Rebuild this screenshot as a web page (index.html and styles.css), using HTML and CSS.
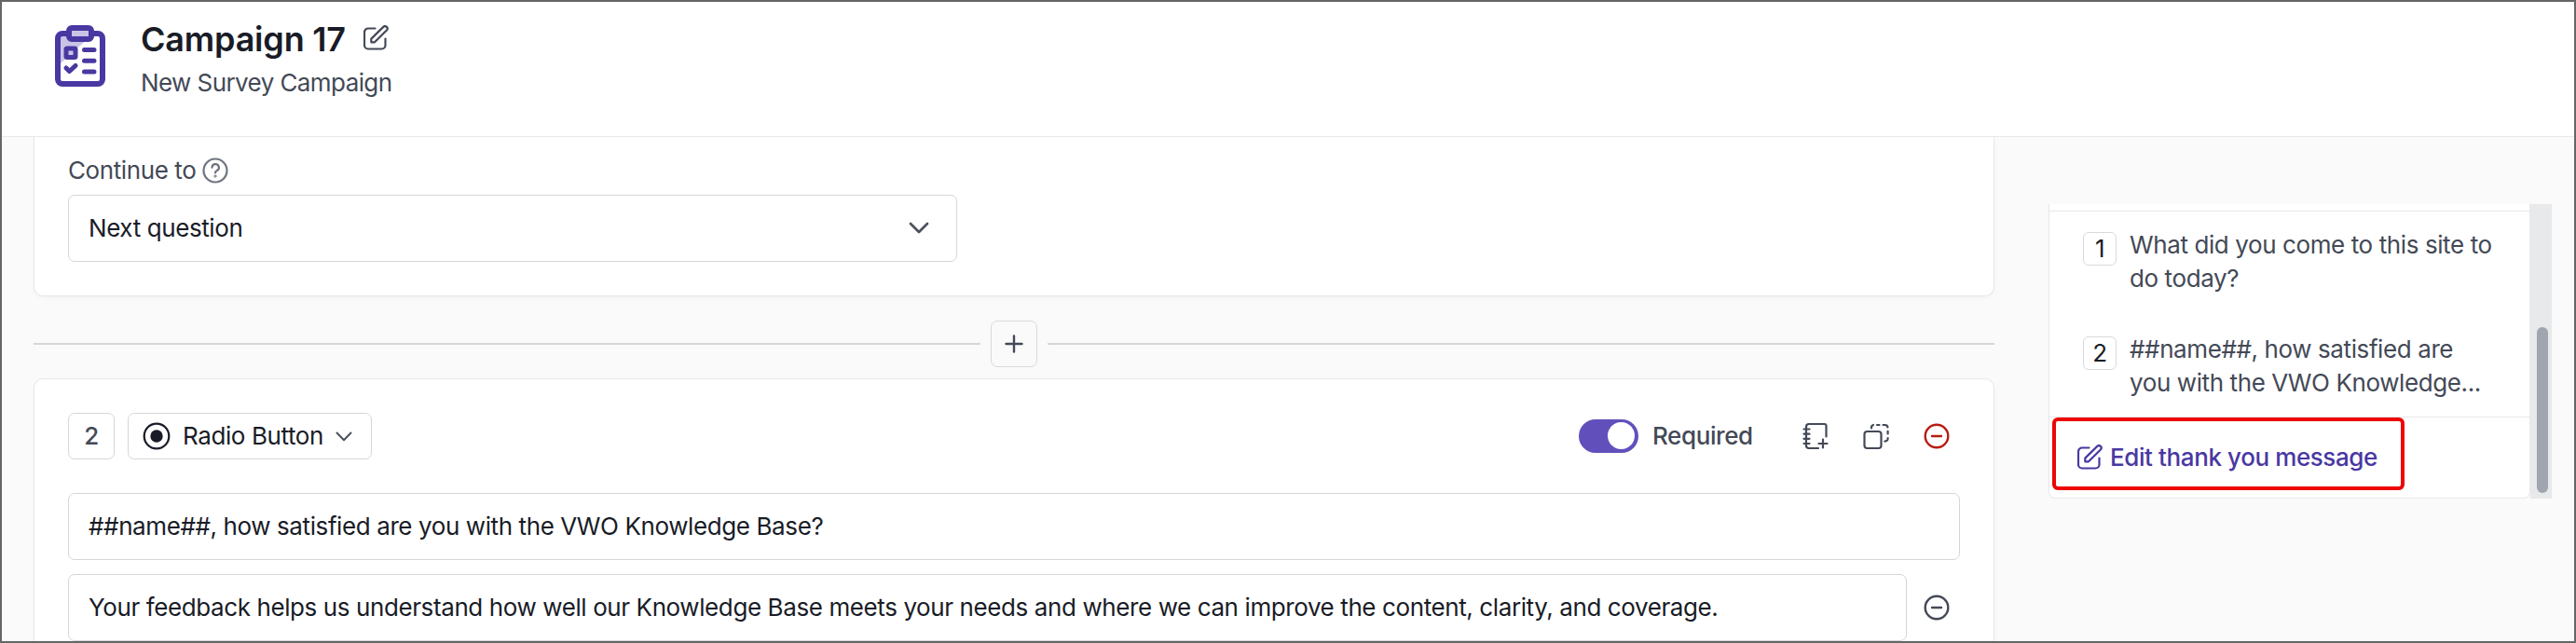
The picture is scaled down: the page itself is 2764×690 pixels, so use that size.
FILE: index.html
```html
<!DOCTYPE html>
<html lang="en">
<head>
  <meta charset="UTF-8" />
  <title>Campaign 17</title>
  <link rel="stylesheet" href="styles.css">
</head>
<body>
  <div class="app">
    <header class="header">
      <svg class="survey-icon" width="54" height="66" viewBox="0 0 54 66" fill="none" stroke="#4938a2" stroke-linecap="round" stroke-linejoin="round">
        <path d="M6 12H38L6 41Z" fill="#c9c4e6" stroke="none"/>
        <rect x="3" y="9" width="48" height="54" rx="5" stroke-width="6"/>
        <rect x="15" y="3" width="24" height="12" rx="3" fill="#c9c4e6" stroke-width="6"/>
        <rect x="12" y="25" width="10" height="9.5" rx="1" fill="#c9c4e6" stroke-width="5"/>
        <path d="M31.5 26.5h10.500M31.500 38.300h10.500M31.500 50h10.500M12 46l3.500 3.500 6.500-6" stroke-width="5"/>
      </svg>
      <div class="heading">
        <div class="title-row">
          <h1>Campaign 17</h1>
          <svg width="28" height="28" viewBox="0 0 28 28" fill="none" stroke="#434956" stroke-width="2.200" stroke-linecap="round" stroke-linejoin="round">
            <path d="M12.500 3.500H5a4 4 0 0 0-4 4V21.500a4 4 0 0 0 4 4H19.500a4 4 0 0 0 4-4V14.500"/>
            <path d="M8.300 18.300V14.600L21.300 1.900a2.500 2.500 0 0 1 3.600 3.600L12 18.300Z"/>
          </svg>
        </div>
        <p>New Survey Campaign</p>
      </div>
    </header>

    <div class="content">
      <main class="questions">
        <section class="card card-top">
          <div class="label">
            <span class="label-text">Continue to</span>
            <svg width="28" height="28" viewBox="0 0 28 28" fill="none" stroke="#6f7480" stroke-width="2.200" stroke-linecap="round">
              <circle cx="14" cy="14" r="12.500"/>
              <path d="M10.500 10.800a3.700 3.700 0 1 1 5.300 3.300c-1.200.6-1.800 1.200-1.800 2.400"/>
              <circle cx="14" cy="20" r="0.500"/>
            </svg>
          </div>
          <div class="select">
            <span class="select-text">Next question</span>
            <svg width="22" height="14" viewBox="0 0 22 14" fill="none" stroke="#4d515e" stroke-width="2.800" stroke-linecap="round" stroke-linejoin="round"><path d="M2 2l9 9 9-9"/></svg>
          </div>
        </section>

        <div class="divider">
          <span class="line"></span>
          <button class="add-btn" aria-label="Add">
            <svg width="20" height="20" viewBox="0 0 20 20" stroke="#434956" stroke-width="2.400" stroke-linecap="round"><path d="M10 1.500v17M1.500 10h17"/></svg>
          </button>
          <span class="line"></span>
        </div>

        <section class="card card-bottom">
          <div class="toolbar">
            <span class="number">2</span>
            <div class="type-select">
              <svg width="30" height="30" viewBox="0 0 30 30"><circle cx="15" cy="15" r="13.300" fill="none" stroke="#191c27" stroke-width="2.200"/><circle cx="15" cy="15" r="6.700" fill="#191c27"/></svg>
              <span class="type-text">Radio Button</span>
              <svg width="18" height="11" viewBox="0 0 18 11" fill="none" stroke="#4d515e" stroke-width="2" stroke-linecap="round" stroke-linejoin="round"><path d="M1.500 1.500l7.500 7.800 7.500-7.800"/></svg>
            </div>
            <span class="toggle"><span class="knob"></span></span>
            <span class="required">Required</span>
            <div class="actions">
              <svg width="28" height="30" viewBox="0 0 28 30" fill="none" stroke="#434956" stroke-width="2.200" stroke-linecap="round" stroke-linejoin="round">
                <path d="M17 28H7a3 3 0 0 1-3-3V5a3 3 0 0 1 3-3H23.500a2 2 0 0 1 2 2V15.500"/>
                <path d="M1.500 7.500h6M1.500 12.700h6M1.500 17.800h6M1.500 23h6M22 18.500v9M17.500 23h9"/>
              </svg>
              <svg width="28" height="30" viewBox="0 0 28 30" fill="none" stroke="#434956" stroke-width="2.200" stroke-linecap="round" stroke-linejoin="round">
                <rect x="1.500" y="10" width="18" height="18" rx="3"/>
                <path d="M9 6.500V6a3 3 0 0 1 2-3M15 3h2.500M21.500 3h2a3 3 0 0 1 3 2.500M26.600 9.800v2.700M26.600 17v1a2.800 2.800 0 0 1-3.300 2.500"/>
              </svg>
              <svg width="28" height="28" viewBox="0 0 28 28" fill="none" stroke="#b71c12" stroke-width="2.400" stroke-linecap="round"><circle cx="14" cy="14" r="12.300"/><path d="M9 14h10"/></svg>
            </div>
          </div>
          <div class="field"><span class="field-text">##name##, how satisfied are you with the VWO Knowledge Base?</span></div>
          <div class="description">
            <div class="field"><span class="field-text">Your feedback helps us understand how well our Knowledge Base meets your needs and where we can improve the content, clarity, and coverage.</span></div>
            <svg width="28" height="28" viewBox="0 0 28 28" fill="none" stroke="#434956" stroke-width="2.400" stroke-linecap="round"><circle cx="14" cy="14" r="12.300"/><path d="M9 14h10"/></svg>
          </div>
        </section>
      </main>

      <aside class="sidebar">
        <div class="panel">
          <ol class="question-list">
            <li><span class="badge">1</span><span class="question">What did you come to this site to<br>do today?</span></li>
            <li><span class="badge">2</span><span class="question">##name##, how satisfied are<br>you with the VWO Knowledge...</span></li>
          </ol>
          <div class="panel-footer">
            <a class="edit-link" href="#">
              <svg width="28" height="28" viewBox="0 0 28 28" fill="none" stroke="#4938a2" stroke-width="2.200" stroke-linecap="round" stroke-linejoin="round">
                <path d="M12.500 3.500H5a4 4 0 0 0-4 4V21.500a4 4 0 0 0 4 4H19.500a4 4 0 0 0 4-4V14.500"/>
                <path d="M8.300 18.300V14.600L21.300 1.900a2.500 2.500 0 0 1 3.600 3.600L12 18.300Z"/>
              </svg>
              <span class="edit-text">Edit thank you message</span>
            </a>
          </div>
        </div>
        <div class="scrollbar"><div class="thumb"></div></div>
      </aside>
    </div>
  </div>
</body>
</html>
```
FILE: styles.css
```css
* { box-sizing: border-box; }
body { margin: 0; font-family: Inter, "Liberation Sans", sans-serif; font-size: 26px; line-height: 36px; letter-spacing: -0.4px; color: #191c27; }
svg { display: block; flex: none; }
.app { display: flex; flex-direction: column; height: 690px; border: 2px solid #666; background: #fafafa; overflow: hidden; }

.header { display: flex; gap: 38px; flex: none; height: 145px; padding: 18px 0 0 57px; background: #fff; border-bottom: 1px solid #e8e8ea; }
.survey-icon { margin-top: 7px; }
.title-row { display: flex; align-items: flex-start; gap: 19px; }
.title-row svg { margin-top: 7px; }
h1 { margin: 0; font-size: 36px; line-height: 44px; font-weight: 600; letter-spacing: -0.2px; }
.heading p { margin: 7px 0 0; color: #434956; letter-spacing: -0.58px; }

.content { display: flex; flex: 1; min-height: 0; padding-left: 34px; }
.questions { width: 2104px; flex: none; }
.card { background: #fff; border: 1px solid #e8e8ea; padding: 0 36px; box-shadow: 0 2px 4px rgba(0, 0, 0, 0.03); }
.card-top { height: 171px; border-top: 0; border-radius: 0 0 10px 10px; padding-top: 18px; }
.card-bottom { height: 300px; border-radius: 10px 10px 0 0; padding-top: 36px; }
.label { display: flex; align-items: center; gap: 7px; color: #434956; }
.select { display: flex; align-items: center; justify-content: space-between; width: 954px; height: 72px; margin-top: 8px; padding: 0 29px 0 21px; border: 1px solid #d5d6da; border-radius: 7px; }

.divider { display: flex; align-items: center; gap: 11px; height: 88px; padding-top: 14px; }
.line { flex: 1; height: 2px; background: #d5d6dc; }
.add-btn { display: flex; align-items: center; justify-content: center; width: 50px; height: 50px; padding: 0; border: 1px solid #d9dadd; border-radius: 7px; background: #fafafa; }

.toolbar { display: flex; align-items: center; height: 50px; margin-bottom: 36px; }
.number { width: 50px; height: 50px; border: 1px solid #d5d6da; border-radius: 7px; text-align: center; line-height: 47px; font-weight: 500; color: #434956; }
.type-select { display: flex; align-items: center; width: 262px; height: 50px; margin-left: 14px; padding: 0 20px 0 15px; border: 1px solid #d5d6da; border-radius: 7px; }
.type-text { flex: 1; margin-left: 13px; }
.toggle { width: 64px; height: 36px; margin-left: auto; padding: 3px 4px; border-radius: 18px; background: #6150bb; }
.knob { display: block; width: 29px; height: 29px; margin-left: auto; border-radius: 50%; background: #fff; }
.required { width: 108px; margin-left: 15px; font-weight: 500; color: #434956; }
.actions { display: flex; align-items: center; gap: 37px; margin-left: 53px; margin-right: 11px; }
.field { flex: 1; height: 72px; padding: 0 21px; border: 1px solid #d5d6da; border-radius: 7px; line-height: 70px; white-space: nowrap; }
.description { display: flex; align-items: center; gap: 18px; margin-top: 15px; padding-right: 11px; }

.sidebar { display: flex; width: 540px; height: 316px; margin: 72px 0 0 58px; }
.panel { width: 517px; flex: none; background: #fff; border: 1px solid #e8e8ea; border-top: 0; border-radius: 0 0 7px 7px; color: #434956; }
.question-list { list-style: none; margin: 7px 0 0; padding: 18px 0 0; border-top: 1px solid #e8e8ea; height: 221px; }
.question-list li { display: flex; align-items: flex-start; gap: 14px; padding-left: 36px; height: 112px; }
.badge { width: 36px; height: 36px; margin-top: 4px; border: 1px solid #d9dadd; border-radius: 6px; text-align: center; line-height: 34px; color: #191c27; }
.panel-footer { border-top: 1px solid #e8e8ea; padding-left: 3px; }
.edit-link { display: flex; align-items: center; width: 378px; height: 78px; padding: 8px 0 0 23px; border: 4px solid #ed0505; border-radius: 6px; text-decoration: none; font-weight: 500; color: #4938a2; }
.edit-text { margin-left: 7px; }
.scrollbar { width: 23px; padding: 132px 4px 6px 7px; background: #e8e9eb; }
.thumb { height: 178px; border-radius: 6px; background: #a1a5ae; }
```
